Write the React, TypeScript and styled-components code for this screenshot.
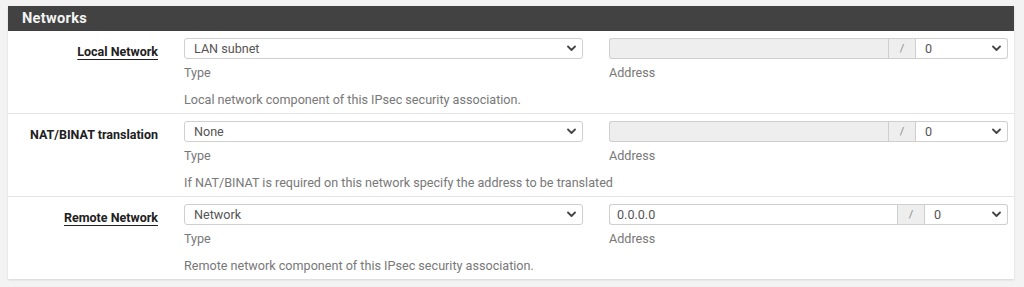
import React from "react";
import styled, { createGlobalStyle } from "styled-components";

const Global = createGlobalStyle`
  html, body { margin: 0; padding: 0; background: #f3f3f3; }
  body { font-family: Roboto, "Liberation Sans", Arial, sans-serif; }
  * { box-sizing: border-box; }
`;

const Page = styled.div`
  padding: 6px 10px 0 8px;
  width: 1024px;
  height: 287px;
  overflow: hidden;
`;

const Panel = styled.section`
  background: #fff;
  box-shadow: 0 1px 2px rgba(0, 0, 0, 0.12);
`;

const Heading = styled.h2`
  margin: 0;
  height: 25px;
  background: #424242;
  color: #f2f4f2;
  font-size: 14.6px;
  font-weight: 700;
  line-height: 25px;
  padding-left: 14px;
  letter-spacing: 0.3px;
`;

const Row = styled.div<{ $last?: boolean }>`
  display: grid;
  grid-template-columns: 150px 399px 399px;
  column-gap: 26px;
  height: ${(p) => (p.$last ? 82 : 83)}px;
  border-bottom: ${(p) => (p.$last ? "none" : "1px solid #e4e4e4")};
  padding-top: 7px;
`;

const Label = styled.div`
  text-align: right;
  padding-top: 5px;
  font-size: 12.5px;
  line-height: 17px;
  font-weight: 700;
  color: #212121;
  white-space: nowrap;
`;

const LabelText = styled.span<{ $required?: boolean }>`
  text-decoration: ${(p) => (p.$required ? "underline" : "none")};
  text-underline-offset: 3px;
  text-decoration-thickness: 1px;
`;

const Col = styled.div`
  display: flex;
  flex-direction: column;
`;

const SelectWrap = styled.div<{ $w?: number }>`
  position: relative;
  height: 21px;
  width: ${(p) => (p.$w ? `${p.$w}px` : "100%")};
  flex: none;
`;

const Select = styled.div<{ $right?: boolean }>`
  height: 21px;
  border: 1px solid #cfcfcf;
  border-radius: ${(p) => (p.$right ? "0 3px 3px 0" : "3px")};
  border-left: ${(p) => (p.$right ? "none" : "1px solid #cfcfcf")};
  background: #fff;
  padding-left: 9px;
  font-size: 12.6px;
  line-height: 19px;
  color: #555;
`;

const Chevron = styled.svg`
  position: absolute;
  right: 7px;
  top: 7px;
  width: 9px;
  height: 7px;
`;

const Hint = styled.div`
  font-size: 12.6px;
  line-height: 17px;
  color: #787878;
  margin-top: 5px;
`;

const Help = styled.div`
  font-size: 12.6px;
  line-height: 17px;
  color: #787878;
  margin-top: 10px;
  white-space: nowrap;
`;

const Group = styled.div`
  display: flex;
  height: 21px;
`;

const AddrInput = styled.div<{ $disabled?: boolean }>`
  flex: 1;
  height: 21px;
  border: 1px solid #cfcfcf;
  border-right: none;
  border-radius: 3px 0 0 3px;
  background: ${(p) => (p.$disabled ? "#eeeeee" : "#fff")};
  padding-left: 7px;
  font-size: 12.6px;
  line-height: 19px;
  color: #555;
`;

const Addon = styled.div`
  width: 28px;
  height: 21px;
  border: 1px solid #cfcfcf;
  background: #eeeeee;
  color: #888;
  font-size: 11px;
  line-height: 19px;
  text-align: center;
  flex: none;
`;

const ChevronIcon = () => (
  <Chevron viewBox="0 0 9 7">
    <path d="M1 1.5 L4.5 5 L8 1.5" fill="none" stroke="#444" strokeWidth="1.8" strokeLinecap="round" strokeLinejoin="round" />
  </Chevron>
);

type RowData = {
  label: string;
  required: boolean;
  type: string;
  help: string;
  address: string;
  disabled: boolean;
  maskWidth: number;
};

const rows: RowData[] = [
  {
    label: "Local Network",
    required: true,
    type: "LAN subnet",
    help: "Local network component of this IPsec security association.",
    address: "",
    disabled: true,
    maskWidth: 92,
  },
  {
    label: "NAT/BINAT translation",
    required: false,
    type: "None",
    help: "If NAT/BINAT is required on this network specify the address to be translated",
    address: "",
    disabled: true,
    maskWidth: 92,
  },
  {
    label: "Remote Network",
    required: true,
    type: "Network",
    help: "Remote network component of this IPsec security association.",
    address: "0.0.0.0",
    disabled: false,
    maskWidth: 83,
  },
];

export default function App() {
  return (
    <>
      <Global />
      <Page>
        <Panel>
          <Heading>Networks</Heading>
          {rows.map((r, i) => (
            <Row key={r.label} $last={i === rows.length - 1}>
              <Label>
                <LabelText $required={r.required}>{r.label}</LabelText>
              </Label>
              <Col>
                <SelectWrap>
                  <Select>{r.type}</Select>
                  <ChevronIcon />
                </SelectWrap>
                <Hint>Type</Hint>
                <Help>{r.help}</Help>
              </Col>
              <Col>
                <Group>
                  <AddrInput $disabled={r.disabled}>{r.address}</AddrInput>
                  <Addon>/</Addon>
                  <SelectWrap $w={r.maskWidth}>
                    <Select $right>0</Select>
                    <ChevronIcon />
                  </SelectWrap>
                </Group>
                <Hint>Address</Hint>
              </Col>
            </Row>
          ))}
        </Panel>
      </Page>
    </>
  );
}
